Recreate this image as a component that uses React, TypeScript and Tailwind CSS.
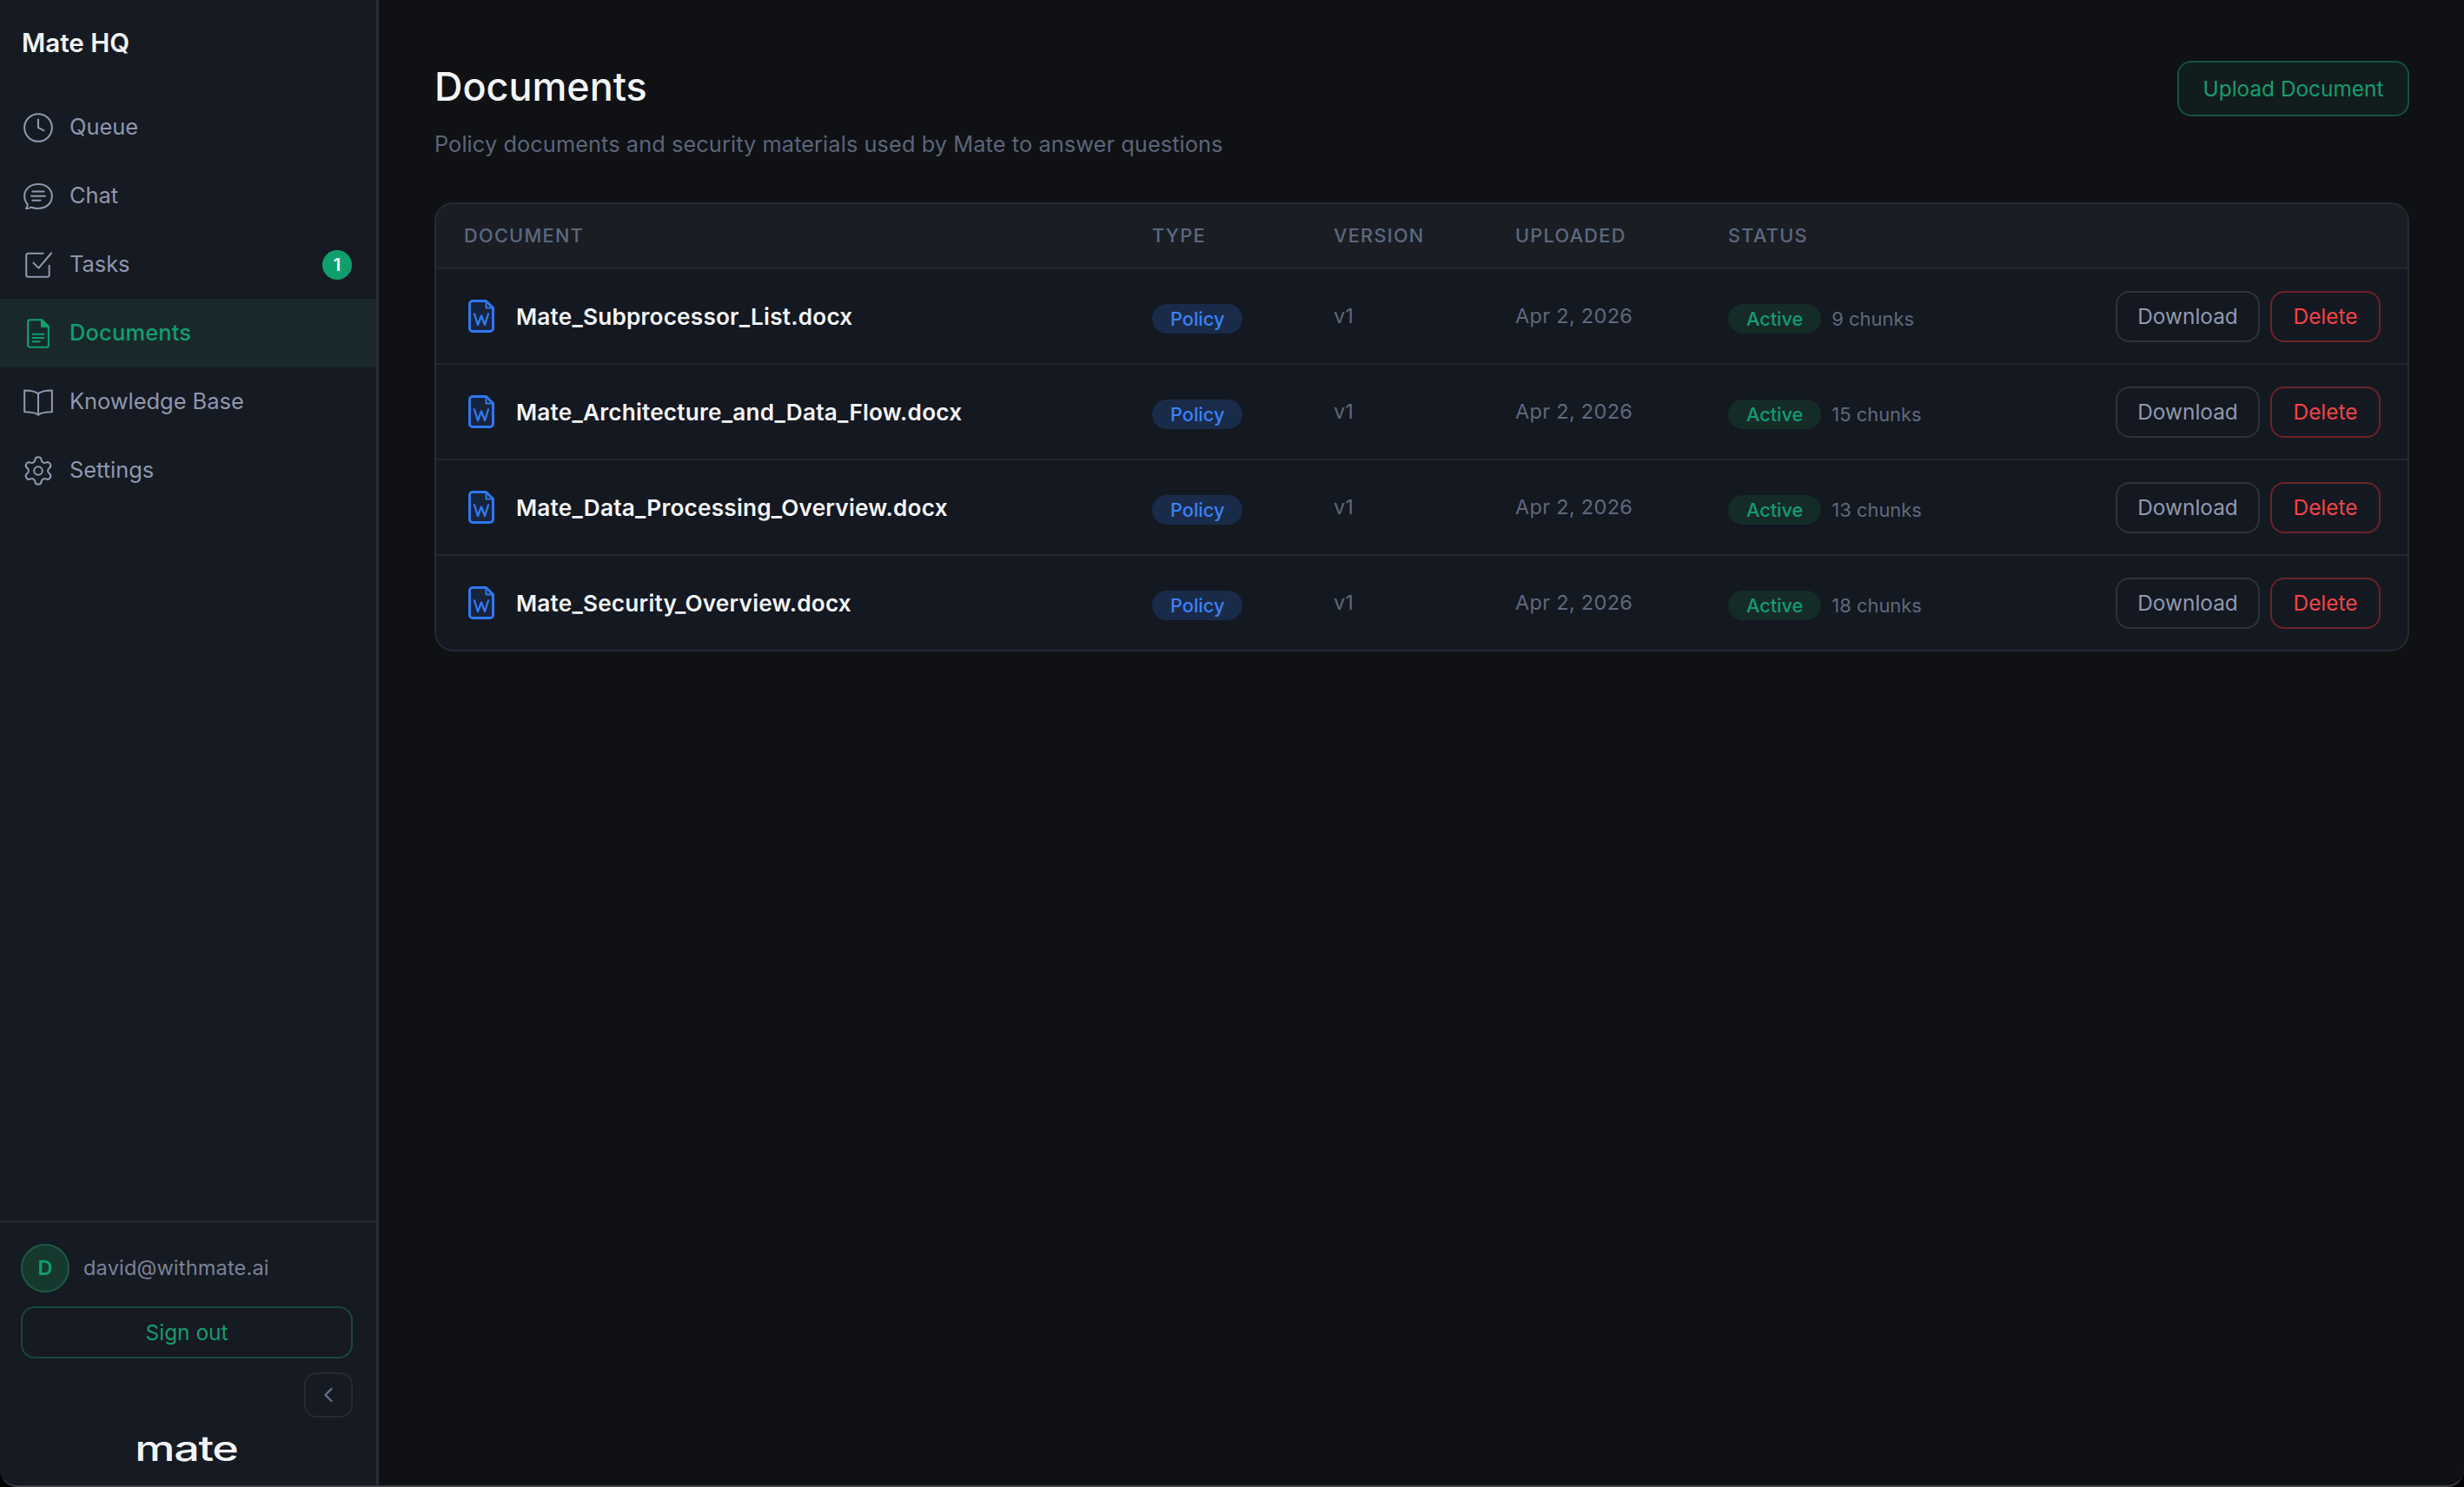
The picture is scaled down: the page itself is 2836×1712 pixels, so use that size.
import { ChevronLeft, Clock, Settings } from "lucide-react";
import type { ReactNode } from "react";

const font = { fontFamily: "Inter, 'Liberation Sans', sans-serif" };

function Icon({ children }: { children: ReactNode }) {
  return (
    <svg viewBox="0 0 24 24" fill="none" stroke="currentColor" strokeWidth={1.3} strokeLinecap="round" strokeLinejoin="round" className="w-[38px] h-[38px] shrink-0">
      {children}
    </svg>
  );
}

const navItems: { label: string; icon: ReactNode; active?: boolean; badge?: string }[] = [
  { label: "Queue", icon: <Clock className="w-[38px] h-[38px] shrink-0" strokeWidth={1.3} /> },
  {
    label: "Chat",
    icon: (
      <Icon>
        <path d="M3.2 21c1.3 0 2.500-.4 3.500-1.100 1.500.6 3.200.9 5.300.9 5.500 0 10-3.400 10-8.900S17.500 3.200 12 3.200 2 6.500 2 11.900c0 2.400.8 4.400 2.300 5.900-.1 1.100-.5 2.300-1.100 3.200z" />
        <path d="M7.800 8.500h8.400M7 11.800h10M7.800 15h5.800" />
      </Icon>
    ),
  },
  {
    label: "Tasks",
    badge: "1",
    icon: (
      <Icon>
        <path d="M20 12.500v6.800a1.400 1.400 0 0 1-1.400 1.400H4.700a1.400 1.400 0 0 1-1.400-1.400V5a1.400 1.400 0 0 1 1.400-1.400h10.800" />
        <path d="M8.500 10.500l3.800 3.800L21.500 3.500" />
      </Icon>
    ),
  },
  {
    label: "Documents",
    active: true,
    icon: (
      <Icon>
        <path d="M6 2h8.500l5 5v13.500a1.500 1.500 0 0 1-1.500 1.500H6a1.500 1.500 0 0 1-1.500-1.500v-17A1.500 1.500 0 0 1 6 2z" />
        <path d="M14.500 2l5 5h-5z" fill="currentColor" />
        <path d="M8 12.500h8M8 15.200h8M8 17.900h5" />
      </Icon>
    ),
  },
  {
    label: "Knowledge Base",
    icon: (
      <Icon>
        <path d="M12 5.800C10 4.300 6.800 3.500 2 3.500v15.600c4.800 0 8 .6 10 2.100 2-1.500 5.200-2.100 10-2.100V3.500c-4.800 0-8 .8-10 2.300z" />
        <path d="M12 5.800v15.400" />
      </Icon>
    ),
  },
  { label: "Settings", icon: <Settings className="w-[38px] h-[38px] shrink-0" strokeWidth={1.3} /> },
];

const docs = [
  { name: "Mate_Subprocessor_List.docx", chunks: "9 chunks" },
  { name: "Mate_Architecture_and_Data_Flow.docx", chunks: "15 chunks" },
  { name: "Mate_Data_Processing_Overview.docx", chunks: "13 chunks" },
  { name: "Mate_Security_Overview.docx", chunks: "18 chunks" },
];

function WordIcon() {
  return (
    <svg viewBox="0 0 30 38" fill="none" className="w-[30px] h-[38px] shrink-0 text-[#2f78ef]" stroke="currentColor" strokeWidth={3} strokeLinejoin="round">
      <path d="M5 1.500h15.500l8 8V33a3.500 3.500 0 0 1-3.500 3.500H5A3.500 3.500 0 0 1 1.500 33V5A3.500 3.500 0 0 1 5 1.500z" fill="#18233c" />
      <path d="M20.500 1.500v8h8" strokeWidth={2} />
      <path d="M7 16.500l4 12.500 4-10.500 4 10.500 4-12.500" strokeWidth={2.4} strokeLinecap="round" />
    </svg>
  );
}

export default function App() {
  return (
    <div style={font} className="h-screen w-full bg-black">
      <div className="flex h-full w-full bg-[#0f1115] overflow-hidden rounded-b-[20px] border-b-2 border-[#3d4045]">
        {/* Sidebar */}
        <aside className="flex flex-col w-[436px] shrink-0 h-full bg-[#161a22] border-r-[3px] border-[#2a2d35]">
          <div className="h-[107px] pl-[25px] pt-[29px]">
            <span className="block text-[29.5px] leading-[40px] font-semibold text-[#f4f6f9]">Mate HQ</span>
          </div>
          <nav className="flex flex-col">
            {navItems.map((item) => (
              <div
                key={item.label}
                className={`flex items-center h-[79px] pl-[25px] pr-[28px] gap-[17px] ${item.active ? "bg-[#19292b] text-[#0f9f6e]" : "text-[#8f97ad]"}`}
              >
                {item.icon}
                <span className={`flex-1 text-[25.4px] ${item.active ? "font-medium tracking-[0.2px]" : ""}`}>{item.label}</span>
                {item.badge && (
                  <span className="flex items-center justify-center w-[34px] h-[34px] rounded-full bg-[#0f9f6e] text-white text-[20px] font-semibold">
                    {item.badge}
                  </span>
                )}
              </div>
            ))}
          </nav>

          <div className="mt-auto border-t-[3px] border-[#22262d] pl-[24px] pr-[27px] pt-[24px] pb-[24px]">
            <div className="flex items-center gap-[16px]">
              <span className="flex items-center justify-center w-[56px] h-[56px] rounded-full bg-[#17382f] border-2 border-[#1d5a45] text-[#0f9f6e] text-[23.5px] font-semibold">D</span>
              <span className="text-[23.5px] tracking-[0.2px] text-[#7a8398]">david@withmate.ai</span>
            </div>
            <button className="block w-full h-[60px] mt-[16px] rounded-[16px] border-2 border-[#174a3b] text-[#0f9f6e] text-[24.4px]">Sign out</button>
            <div className="flex justify-end mt-[16px]">
              <button className="flex items-center justify-center w-[56px] h-[52px] rounded-[14px] border-2 border-[#262a32] text-[#667087]">
                <ChevronLeft className="w-7 h-7" strokeWidth={2} />
              </button>
            </div>
            <div className="flex justify-center mt-[18px] -translate-x-[1px]">
              <span className="text-[40px] leading-[36px] font-medium text-[#f2f4f8] scale-x-[1.3] tracking-[-1px]">mate</span>
            </div>
          </div>
        </aside>

        {/* Main */}
        <main className="flex-1 pl-[64px] pr-[63px] pt-[70px]">
          <div className="flex items-start justify-between">
            <div>
              <h1 className="text-[44.9px] leading-[60px] font-medium text-[#f4f6f9]">Documents</h1>
              <p className="mt-[16px] text-[25.3px] leading-[40px] tracking-[0.1px] text-[#5b6579]">
                Policy documents and security materials used by Mate to answer questions
              </p>
            </div>
            <button className="w-[267px] h-[64px] rounded-[16px] border-2 border-[#14523f] bg-[#111c1c] text-[#0f9f6e] text-[24.4px]">
              Upload Document
            </button>
          </div>

          <div className="mt-[47px] rounded-[22px] border-2 border-[#262a32] overflow-hidden">
            <div className="grid grid-cols-[792px_209px_209px_245px_1fr] items-center h-[73px] px-[32px] bg-[#1a1e24] text-[21.7px] font-medium tracking-[1.3px] text-[#5d6880]">
              <span>DOCUMENT</span>
              <span>TYPE</span>
              <span>VERSION</span>
              <span>UPLOADED</span>
              <span>STATUS</span>
            </div>
            {docs.map((d) => (
              <div key={d.name} className="grid grid-cols-[792px_209px_209px_245px_1fr] items-center h-[110px] pl-[32px] pr-[31px] bg-[#141821] border-t-2 border-[#22262d]">
                <div className="flex items-center gap-[25px] pl-[5px]">
                  <WordIcon />
                  <span className="pt-[2px] text-[26.2px] font-semibold tracking-[0.2px] text-[#f4f6f9]">{d.name}</span>
                </div>
                <div>
                  <span className="inline-flex items-center h-[34px] mt-[6px] px-[21px] rounded-full bg-[#1a2b4a] text-[#3b82f6] text-[21.7px] font-medium">Policy</span>
                </div>
                <span className="text-[23.5px] text-[#5f687c]">v1</span>
                <span className="text-[23.5px] tracking-[0.3px] text-[#5f687c]">Apr 2, 2026</span>
                <div className="flex items-center">
                  <span className="inline-flex items-center h-[34px] mt-[6px] px-[21px] rounded-full bg-[#152b28] text-[#0f9f6e] text-[21.7px] font-medium">Active</span>
                  <span className="ml-[12px] mt-[6px] text-[21.9px] text-[#5f687c]">{d.chunks}</span>
                  <div className="ml-auto flex gap-[12px]">
                    <button className="w-[166px] h-[59px] rounded-[16px] border-2 border-[#2e323b] text-[#9099ae] text-[24.4px]">Download</button>
                    <button className="w-[127px] h-[59px] rounded-[16px] border-2 border-[#6a2429] text-[#f04349] text-[24.4px]">Delete</button>
                  </div>
                </div>
              </div>
            ))}
          </div>
        </main>
      </div>
    </div>
  );
}
